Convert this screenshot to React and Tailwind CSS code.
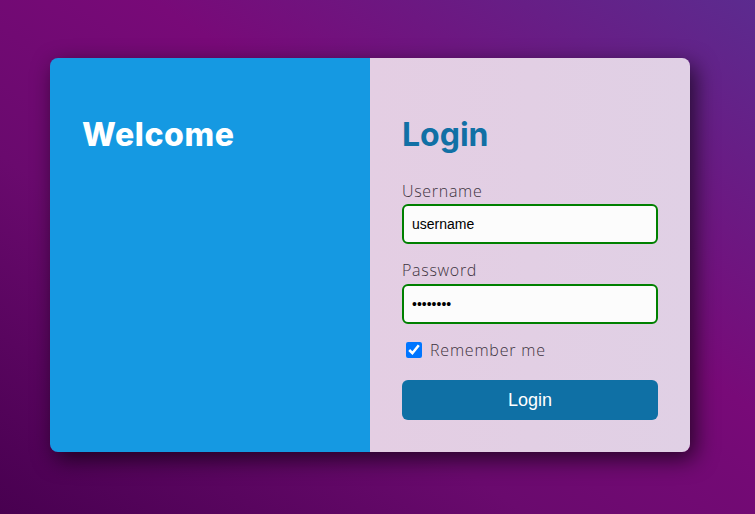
import React from 'react';

const App = () => {
  return (
    <div className="w-full h-[514px] flex items-center bg-[linear-gradient(to_top_right,#480050_0%,#6a0a6e_35%,#780a78_60%,#5c2b8f_100%)]">
      {/* card */}
      <div className="ml-[50px] w-[640px] h-[394px] -mt-[4px] flex rounded-lg overflow-hidden shadow-[5px_7px_22px_rgba(0,0,0,0.65)]">
        {/* left */}
        <div className="w-[320px] bg-[#1599e2] px-8 pt-[57px]">
          <h1 className="text-[32px] leading-[40px] font-extrabold tracking-[0.6px] text-white font-['Inter',sans-serif]">
            Welcome
          </h1>
        </div>

        {/* right */}
        <div className="w-[320px] bg-[linear-gradient(to_right,#e4cee3,#e0d0e5)] px-8 pt-[57px]">
          <h2 className="text-[32px] leading-[40px] font-bold text-[#1170a5] font-['Inter',sans-serif]">
            Login
          </h2>

          <form className="mt-6 flex flex-col font-['Open_Sans',sans-serif]" onSubmit={(e) => e.preventDefault()}>
            <label className="text-base leading-6 font-light tracking-[0.7px] text-[#3d3340] mb-px">Username</label>
            <input
              type="text"
              defaultValue="username"
              className="h-10 w-full rounded-md border-2 border-[#008000] bg-[#fcfcfc] px-2 text-sm text-black outline-none font-['Liberation_Sans',sans-serif]"
            />

            <label className="mt-[14px] text-base leading-6 font-light tracking-[0.7px] text-[#3d3340] mb-0.5">Password</label>
            <input
              type="password"
              defaultValue="password"
              className="h-10 w-full rounded-md border-2 border-[#008000] bg-[#fcfcfc] px-2 text-sm text-black outline-none font-['Liberation_Sans',sans-serif]"
            />

            <div className="mt-[14px] flex items-center gap-2 pl-1">
              <input type="checkbox" defaultChecked className="w-4 h-4 accent-[#0075ff]" />
              <span className="text-base leading-6 font-light tracking-[0.8px] text-[#3d3340]">Remember me</span>
            </div>

            <button
              type="submit"
              className="mt-[18px] h-10 w-full rounded-md bg-[#0f70a5] text-white text-lg font-['Liberation_Sans',sans-serif]"
            >
              Login
            </button>
          </form>
        </div>
      </div>
    </div>
  );
};

export default App;
